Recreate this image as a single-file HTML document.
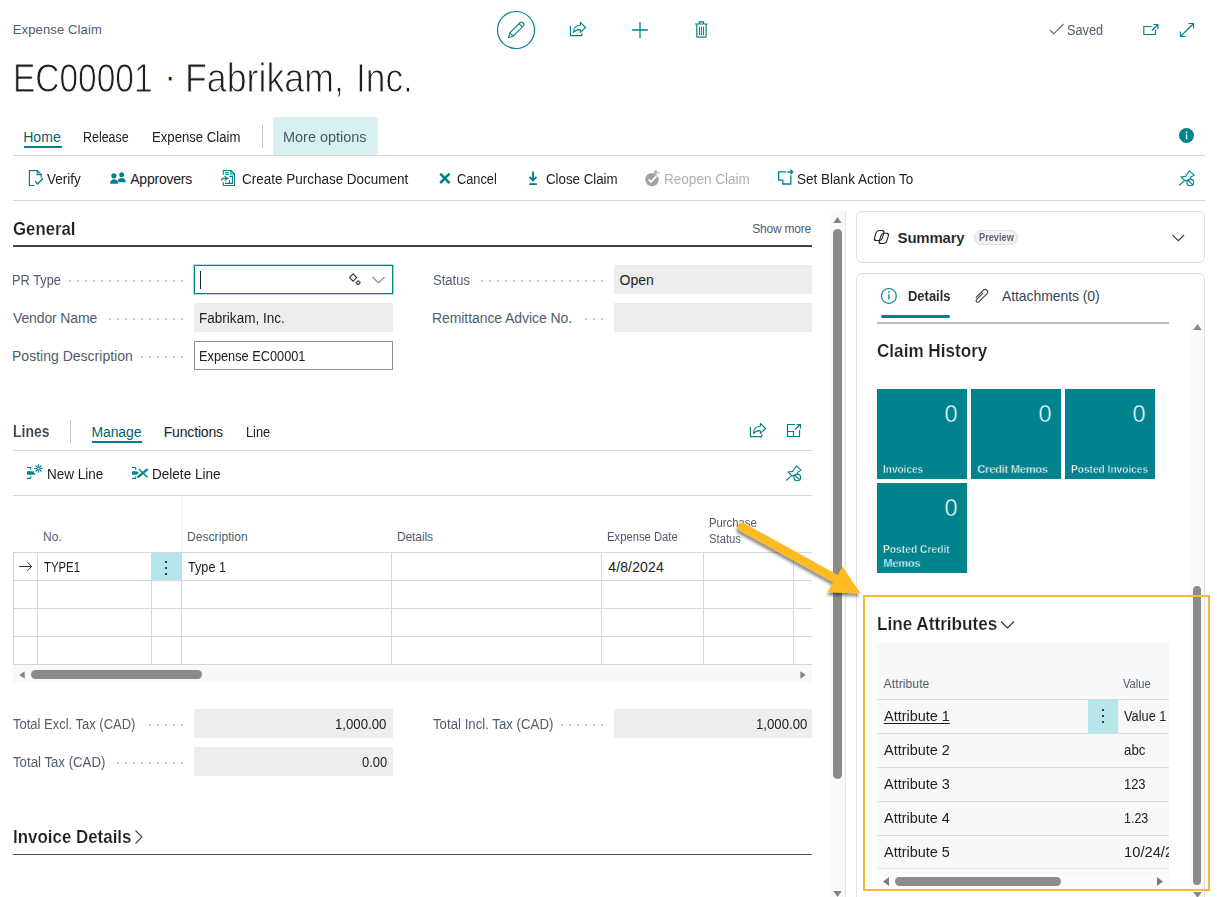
<!DOCTYPE html>
<html lang="en"><head><meta charset="utf-8"><title>Expense Claim</title>
<style>
*{box-sizing:border-box;margin:0;padding:0}
html,body{width:1217px;height:897px;overflow:hidden;background:#fff}
body{position:relative;font-family:"Liberation Sans", sans-serif;color:#212121}
body>div,body>span,body>svg{position:absolute;display:block}
body>span{white-space:nowrap}
</style></head>
<body>
<span style="left:13.7px;top:21.00px;font-size:13px;line-height:18px;font-weight:400;color:#505c6d;letter-spacing:0.142px;margin-left:-1.00px;">Expense Claim</span>
<span style="left:15.5px;top:50.14px;font-size:40px;line-height:56px;font-weight:400;color:#1f1f1f;-webkit-text-stroke:0.900px #fff;transform:scaleX(0.8367);transform-origin:0 0;margin-left:-2.51px;">EC00001</span>
<span style="left:163.5px;top:48.14px;font-size:40px;line-height:56px;font-weight:400;color:#1f1f1f;-webkit-text-stroke:0.900px #fff;">·</span>
<span style="left:188px;top:50.14px;font-size:40px;line-height:56px;font-weight:400;color:#1f1f1f;-webkit-text-stroke:0.900px #fff;transform:scaleX(0.8940);transform-origin:0 0;margin-left:-2.68px;">Fabrikam,</span>
<span style="left:358.3px;top:50.14px;font-size:40px;line-height:56px;font-weight:400;color:#1f1f1f;-webkit-text-stroke:0.900px #fff;transform:scaleX(0.8825);transform-origin:0 0;margin-left:-2.65px;">Inc.</span>
<svg style="left:496px;top:10px;" width="40" height="40" viewBox="0 0 40 40" fill="none"><circle cx="20" cy="20" r="18.5" stroke="#00838c" stroke-width="1.2"/><path d="M12.5 27.5l1.3-4.6L24.2 12.5a1.6 1.6 0 0 1 2.3 0l1 1a1.6 1.6 0 0 1 0 2.3L17.1 26.2z M13.8 22.9l3.3 3.3 M23 13.7l3.3 3.3" stroke="#00838c" stroke-width="1.1" stroke-linejoin="round"/></svg>
<svg style="left:569px;top:21px;" width="18" height="17" viewBox="0 0 18 17" fill="none"><path d="M1.400 5V14.600H12.800V12.200" stroke="#00838c" stroke-width="1.200"/><path d="M11.400 1.400L16.500 6.500L11.400 11.400V8.700C8.500 8.500 6 9.500 4.400 11.500C4.600 7.500 7 4.300 11.400 4Z" stroke="#00838c" stroke-width="1.100" stroke-linejoin="round"/></svg>
<svg style="left:631px;top:21px;" width="18" height="18" viewBox="0 0 18 18" fill="none"><path d="M9 1v16M1 9h16" stroke="#00838c" stroke-width="1.3"/></svg>
<svg style="left:694px;top:20px;" width="16" height="19" viewBox="0 0 16 19" fill="none"><path d="M1 4h12.800M5.200 4v-2.200h4.400v2.200M2.800 4v12.400a.8.800 0 0 0 .8.800h7.700a.8.800 0 0 0 .8-.8V4" stroke="#00838c" stroke-width="1.200"/><path d="M5.500 6.700v8.600M7.500 6.700v8.600M9.500 6.700v8.600" stroke="#00838c" stroke-width="1"/></svg>
<svg style="left:1049px;top:23px;" width="16" height="12" viewBox="0 0 16 12" fill="none"><path d="M1 7l3.800 3.800L14.600 1" stroke="#5a6573" stroke-width="1.100"/></svg>
<span style="left:1067px;top:19.65px;font-size:14px;line-height:20px;font-weight:400;color:#505c6d;transform:scaleX(0.9124);transform-origin:0 0;margin-left:0.00px;">Saved</span>
<svg style="left:1142px;top:22px;" width="17" height="15" viewBox="0 0 17 15" fill="none"><path d="M9.500 4.500H1.800v8h11.700V7.500" stroke="#00838c" stroke-width="1.200"/><path d="M9.800 8.500l6-6M11.500 2.500h4.400v4.400" stroke="#00838c" stroke-width="1.200"/></svg>
<svg style="left:1179px;top:22px;" width="16" height="16" viewBox="0 0 16 16" fill="none"><path d="M1.5 14.5l13-13M9.5 1.5h5v5M1.5 9.5v5h5" stroke="#00838c" stroke-width="1.2"/></svg>
<div style="left:273px;top:117px;width:105px;height:38px;background:#d9f0f2;border-radius:3px 3px 0 0"></div>
<span style="left:24.2px;top:127.15px;font-size:14px;line-height:20px;font-weight:400;color:#00656c;letter-spacing:0.047px;margin-left:-1.00px;">Home</span>
<div style="left:24px;top:145.5px;width:37.5px;height:2px;background:#00838c"></div>
<span style="left:84.3px;top:127.15px;font-size:14px;line-height:20px;font-weight:400;color:#212121;transform:scaleX(0.8897);transform-origin:0 0;margin-left:-0.89px;">Release</span>
<span style="left:152.8px;top:127.15px;font-size:14px;line-height:20px;font-weight:400;color:#212121;transform:scaleX(0.9385);transform-origin:0 0;margin-left:-0.94px;">Expense Claim</span>
<div style="left:262px;top:125px;width:1px;height:23px;background:#c4c7cb"></div>
<span style="left:284.5px;top:127.15px;font-size:14px;line-height:20px;font-weight:400;color:#4a5564;transform:scaleX(1.0321);transform-origin:0 0;margin-left:-1.03px;">More options</span>
<div style="left:13px;top:155px;width:1192px;height:1px;background:#d4d6d9"></div>
<svg style="left:1179px;top:128px;" width="15" height="15" viewBox="0 0 15 15" fill="none"><circle cx="7.5" cy="7.5" r="7.5" fill="#00838c"/><rect x="6.8" y="6.3" width="1.5" height="5" fill="#fff"/><rect x="6.8" y="3.6" width="1.5" height="1.6" fill="#fff"/></svg>
<svg style="left:28px;top:170px;" width="16" height="18" viewBox="0 0 16 18" fill="none"><path d="M6.500 15.500H1.400V0.600H9.200L13.200 4.600V7.500" stroke="#00838c" stroke-width="1.200"/><path d="M9.200 0.600V4.600H13.200" stroke="#00838c" stroke-width="1.200"/><path d="M7.200 11.200L9.600 14L15 8.200" stroke="#00838c" stroke-width="1.400"/></svg>
<span style="left:47.3px;top:169.15px;font-size:14px;line-height:20px;font-weight:400;color:#212121;transform:scaleX(0.9596);transform-origin:0 0;margin-left:0.00px;">Verify</span>
<svg style="left:110px;top:172px;" width="16" height="13" viewBox="0 0 16 13" fill="none"><circle cx="11.700" cy="2.800" r="2.500" fill="#00838c"/><path d="M7.300 10.200c0-2.700 1.700-4.300 4.200-4.300 2.600 0 4.300 1.500 4.300 4.300z" fill="#00838c"/><circle cx="3.900" cy="3.800" r="3.100" fill="#fff"/><path d="M-.4 12.500c0-3.500 1.800-5.800 4.400-5.800 2.700 0 4.800 2 4.800 5.800z" fill="#fff"/><circle cx="3.900" cy="3.800" r="2.600" fill="#00838c"/><path d="M0.100 11.800c0-3 1.600-4.600 3.900-4.600 2.400 0 4.300 1.600 4.300 4.600z" fill="#00838c"/></svg>
<span style="left:130.2px;top:169.15px;font-size:14px;line-height:20px;font-weight:400;color:#212121;letter-spacing:-0.213px;margin-left:0.00px;">Approvers</span>
<svg style="left:221px;top:170px;" width="15" height="18" viewBox="0 0 15 18" fill="none"><path d="M2.300 4.700V0.400H9.900L13.500 4V15.500H2.300V12.200M9.900 0.400V4H13.500M4.200 2.500H7.800M4.200 4.400H7.800M8.400 6.400H11.500V13.400H4.500V12.400M8.500 10.300V13.400" stroke="#00838c" stroke-width="1.100"/><path d="M0.400 10.500C0.400 9 1.200 8.400 2.500 8.400H6.300M3.600 6.300L6.800 8.400L3.600 10.500" stroke="#00838c" stroke-width="1.200"/></svg>
<span style="left:241.6px;top:169.15px;font-size:14px;line-height:20px;font-weight:400;color:#212121;transform:scaleX(0.9626);transform-origin:0 0;margin-left:0.00px;">Create Purchase Document</span>
<svg style="left:438px;top:172px;" width="14" height="13" viewBox="0 0 14 13" fill="none"><path d="M2.200 1.700l9.300 9.300M11.500 1.700l-9.300 9.300" stroke="#00838c" stroke-width="2.500"/></svg>
<span style="left:457px;top:169.15px;font-size:14px;line-height:20px;font-weight:400;color:#212121;transform:scaleX(0.9133);transform-origin:0 0;margin-left:0.00px;">Cancel</span>
<svg style="left:526px;top:171px;" width="13" height="16" viewBox="0 0 13 16" fill="none"><path d="M7 0.500v8.500M3.500 5.800L7 9.400l3.500-3.600" stroke="#00838c" stroke-width="1.900"/><path d="M3.200 13.100h7.600" stroke="#00838c" stroke-width="1.800"/></svg>
<span style="left:545.8px;top:169.15px;font-size:14px;line-height:20px;font-weight:400;color:#212121;transform:scaleX(0.9492);transform-origin:0 0;margin-left:0.00px;">Close Claim</span>
<svg style="left:645px;top:170px;" width="17" height="17" viewBox="0 0 17 17" fill="none"><circle cx="7" cy="9.600" r="6.700" fill="#9fa3a8"/><path d="M9 1.500L16 1.500L16 8z" fill="#fff"/><path d="M3.600 9.600L6 11.800L11.800 5.600" stroke="#fff" stroke-width="1.900"/><path d="M14.500 3.600C13.500 1.800 11.800 1.400 10 2.200M11.200 0.300L9.500 2.400L11.800 3.800" stroke="#9fa3a8" stroke-width="1.100"/></svg>
<span style="left:664.8px;top:169.15px;font-size:14px;line-height:20px;font-weight:400;color:#a9b0ba;transform:scaleX(0.9684);transform-origin:0 0;margin-left:-0.97px;">Reopen Claim</span>
<svg style="left:778px;top:169px;" width="16" height="18" viewBox="0 0 16 18" fill="none"><path d="M8.200 2.800H0.600V11.200H4.700V15H12.800V6.300" stroke="#00838c" stroke-width="1.300"/><path d="M9.500 3H14.600M12.500 0.800L14.800 3L12.500 5.200" stroke="#00838c" stroke-width="1.300"/></svg>
<span style="left:797.2px;top:169.15px;font-size:14px;line-height:20px;font-weight:400;color:#212121;transform:scaleX(0.9662);transform-origin:0 0;margin-left:0.00px;">Set Blank Action To</span>
<svg style="left:1179px;top:170px;" width="17" height="17" viewBox="0 0 17 17" fill="none"><path d="M0 15.500L5.800 10.300M8 10.400L6.100 10.900L2 7L6.600 6.400L10.400 0.900L15.100 5.100L11.600 7.200L11.300 8.700" stroke="#00838c" stroke-width="1.100" stroke-linejoin="round"/><circle cx="11.300" cy="12.400" r="3.300" stroke="#00838c" stroke-width="1.100"/><path d="M8.900 10L13.700 14.800" stroke="#00838c" stroke-width="1.100"/></svg>
<div style="left:13px;top:200px;width:1192px;height:1px;background:#d4d6d9"></div>
<span style="left:13.1px;top:217.26px;font-size:18px;line-height:25px;font-weight:700;color:#212121;-webkit-text-stroke:0.200px #fff;transform:scaleX(0.9329);transform-origin:0 0;margin-left:0.00px;">General</span>
<span style="left:752.3px;top:221.34px;font-size:12px;line-height:17px;font-weight:400;color:#505c6d;letter-spacing:-0.215px;margin-left:0.00px;">Show more</span>
<div style="left:13px;top:245px;width:799px;height:1.5px;background:#3b4655"></div>
<span style="left:13px;top:270.15px;font-size:14px;line-height:20px;font-weight:400;color:#505c6d;transform:scaleX(0.9168);transform-origin:0 0;margin-left:-0.92px;">PR Type</span>
<div style="left:69px;top:280px;width:114px;height:2px;background:repeating-linear-gradient(90deg,#c9cbcf 0 2px,transparent 2px 8px)"></div>
<div style="left:194px;top:265px;width:199px;height:29px;background:#fff;border:1px solid #00838c;box-shadow:0 0 0 0.300px #00838c"></div>
<div style="left:199.5px;top:270.5px;width:1px;height:18.0px;background:#222"></div>
<svg style="left:347px;top:272px;" width="14" height="14" viewBox="0 0 14 14" fill="none"><path d="M6.100 1.900L9.700 5.500L6.100 9.100L2.500 5.500z" stroke="#333" stroke-width="1.100"/><path d="M11.200 8.700L13.200 10.700L11.200 12.700L9.200 10.700z" stroke="#333" stroke-width="1.100"/></svg>
<svg style="left:372px;top:276px;" width="13" height="8" viewBox="0 0 13 8" fill="none"><path d="M0.500 1L6.500 7L12.500 1" stroke="#444" stroke-width="1"/></svg>
<span style="left:13px;top:308.15px;font-size:14px;line-height:20px;font-weight:400;color:#505c6d;letter-spacing:-0.132px;margin-left:0.00px;">Vendor Name</span>
<div style="left:109px;top:318px;width:74px;height:2px;background:repeating-linear-gradient(90deg,#c9cbcf 0 2px,transparent 2px 8px)"></div>
<div style="left:194px;top:303px;width:199px;height:29px;background:#ecedef"></div>
<span style="left:199.5px;top:308.15px;font-size:14px;line-height:20px;font-weight:400;color:#212121;transform:scaleX(0.9677);transform-origin:0 0;margin-left:-0.97px;">Fabrikam, Inc.</span>
<span style="left:13px;top:346.15px;font-size:14px;line-height:20px;font-weight:400;color:#505c6d;letter-spacing:0.010px;margin-left:-1.00px;">Posting Description</span>
<div style="left:141px;top:356px;width:42px;height:2px;background:repeating-linear-gradient(90deg,#c9cbcf 0 2px,transparent 2px 8px)"></div>
<div style="left:194px;top:341px;width:199px;height:29px;background:#fff;border:1px solid #8a9099"></div>
<span style="left:199.5px;top:346.15px;font-size:14px;line-height:20px;font-weight:400;color:#212121;transform:scaleX(0.9115);transform-origin:0 0;margin-left:-0.91px;">Expense EC00001</span>
<span style="left:433px;top:270.15px;font-size:14px;line-height:20px;font-weight:400;color:#505c6d;transform:scaleX(0.9322);transform-origin:0 0;margin-left:0.00px;">Status</span>
<div style="left:481px;top:280px;width:122px;height:2px;background:repeating-linear-gradient(90deg,#c9cbcf 0 2px,transparent 2px 8px)"></div>
<div style="left:614px;top:265px;width:198px;height:29px;background:#ecedef"></div>
<span style="left:619.5px;top:270.15px;font-size:14px;line-height:20px;font-weight:400;color:#212121;">Open</span>
<span style="left:433px;top:308.15px;font-size:14px;line-height:20px;font-weight:400;color:#505c6d;letter-spacing:-0.075px;margin-left:-1.00px;">Remittance Advice No.</span>
<div style="left:585px;top:318px;width:18px;height:2px;background:repeating-linear-gradient(90deg,#c9cbcf 0 2px,transparent 2px 8px)"></div>
<div style="left:614px;top:303px;width:198px;height:29px;background:#ecedef"></div>
<span style="left:13.6px;top:421.46px;font-size:16px;line-height:22px;font-weight:700;color:#3b4655;-webkit-text-stroke:0.100px #fff;transform:scaleX(0.8731);transform-origin:0 0;margin-left:-0.87px;">Lines</span>
<div style="left:70px;top:420px;width:1px;height:23px;background:#c4c7cb"></div>
<span style="left:92.4px;top:422.15px;font-size:14px;line-height:20px;font-weight:400;color:#00656c;letter-spacing:-0.101px;margin-left:-1.00px;">Manage</span>
<div style="left:92px;top:441px;width:50px;height:2px;background:#00838c"></div>
<span style="left:164.7px;top:422.15px;font-size:14px;line-height:20px;font-weight:400;color:#212121;letter-spacing:-0.162px;margin-left:-1.00px;">Functions</span>
<span style="left:246.5px;top:422.15px;font-size:14px;line-height:20px;font-weight:400;color:#212121;transform:scaleX(0.9150);transform-origin:0 0;margin-left:-0.92px;">Line</span>
<svg style="left:749px;top:422px;" width="18" height="17" viewBox="0 0 18 17" fill="none"><path d="M1.400 5V14.600H12.800V12.200" stroke="#00838c" stroke-width="1.200"/><path d="M11.400 1.400L16.500 6.500L11.400 11.400V8.700C8.500 8.500 6 9.500 4.400 11.500C4.600 7.500 7 4.300 11.400 4Z" stroke="#00838c" stroke-width="1.100" stroke-linejoin="round"/></svg>
<svg style="left:786px;top:423px;" width="16" height="15" viewBox="0 0 16 15" fill="none"><path d="M9 1.500H1.500v12h12V7" stroke="#00838c" stroke-width="1.200"/><path d="M1.500 8.500h6v5" stroke="#00838c" stroke-width="1.200"/><path d="M9 6.500l5.500-5M10.500 1.500h4v4" stroke="#00838c" stroke-width="1.200"/></svg>
<div style="left:13px;top:450px;width:799px;height:1px;background:#d4d6d9"></div>
<svg style="left:26px;top:465px;overflow:visible;" width="17" height="15" viewBox="0 0 17 15" fill="none"><path d="M1 2.500H4.700V4.700M4.700 11.400V13.400H1" stroke="#00838c" stroke-width="1.100"/><path d="M1 6.200H7.700V8H8.900V9.700H1z" fill="#00838c"/><path d="M8.300 3.500H16.700M12.500 -0.700V7.700M9.500 0.500L15.500 6.500M15.500 0.500L9.500 6.500" stroke="#00838c" stroke-width="1.100"/><circle cx="12.500" cy="3.500" r="1" fill="#fff"/></svg>
<span style="left:48px;top:464.15px;font-size:14px;line-height:20px;font-weight:400;color:#212121;transform:scaleX(0.9639);transform-origin:0 0;margin-left:-0.96px;">New Line</span>
<svg style="left:131px;top:465px;" width="18" height="15" viewBox="0 0 18 15" fill="none"><path d="M1 2.500H4.700V4.700M4.700 11.400V13.400H1" stroke="#00838c" stroke-width="1.100"/><path d="M1 6.200H5.700L7.900 7.950L5.700 9.700H1z" fill="#00838c"/><path d="M7.800 4L16.500 12.200" stroke="#00838c" stroke-width="1.500"/><path d="M16 4.600L7.200 11.800" stroke="#00838c" stroke-width="2.300" stroke-linecap="round"/></svg>
<span style="left:152.8px;top:464.15px;font-size:14px;line-height:20px;font-weight:400;color:#212121;transform:scaleX(0.9680);transform-origin:0 0;margin-left:-0.97px;">Delete Line</span>
<svg style="left:786px;top:465px;" width="17" height="17" viewBox="0 0 17 17" fill="none"><path d="M0 15.500L5.800 10.300M8 10.400L6.100 10.900L2 7L6.600 6.400L10.400 0.900L15.100 5.100L11.600 7.200L11.300 8.700" stroke="#00838c" stroke-width="1.100" stroke-linejoin="round"/><circle cx="11.300" cy="12.400" r="3.300" stroke="#00838c" stroke-width="1.100"/><path d="M8.900 10L13.700 14.800" stroke="#00838c" stroke-width="1.100"/></svg>
<div style="left:13px;top:495px;width:799px;height:1px;background:#d4d6d9"></div>
<span style="left:43px;top:529.34px;font-size:12px;line-height:17px;font-weight:400;color:#505c6d;">No.</span>
<span style="left:187px;top:529.34px;font-size:12px;line-height:17px;font-weight:400;color:#505c6d;letter-spacing:0.065px;margin-left:0.00px;">Description</span>
<span style="left:397px;top:529.34px;font-size:12px;line-height:17px;font-weight:400;color:#505c6d;letter-spacing:-0.113px;margin-left:0.00px;">Details</span>
<span style="left:607px;top:529.34px;font-size:12px;line-height:17px;font-weight:400;color:#505c6d;transform:scaleX(0.9378);transform-origin:0 0;margin-left:0.00px;">Expense Date</span>
<span style="left:709px;top:515.34px;font-size:12px;line-height:17px;font-weight:400;color:#505c6d;transform:scaleX(0.9408);transform-origin:0 0;margin-left:0.00px;">Purchase</span>
<span style="left:709px;top:531.34px;font-size:12px;line-height:17px;font-weight:400;color:#505c6d;transform:scaleX(0.9406);transform-origin:0 0;margin-left:0.00px;">Status</span>
<div style="left:151px;top:553px;width:30px;height:27px;background:#b5e6ea"></div>
<div style="left:13px;top:552px;width:799px;height:1px;background:#d4d6d9"></div>
<div style="left:13px;top:580px;width:799px;height:1px;background:#d4d6d9"></div>
<div style="left:13px;top:608px;width:799px;height:1px;background:#d4d6d9"></div>
<div style="left:13px;top:636px;width:799px;height:1px;background:#d4d6d9"></div>
<div style="left:13px;top:664px;width:799px;height:1px;background:#d4d6d9"></div>
<div style="left:13px;top:552px;width:1px;height:113px;background:#d4d6d9"></div>
<div style="left:37px;top:552px;width:1px;height:113px;background:#d4d6d9"></div>
<div style="left:151px;top:552px;width:1px;height:113px;background:#d4d6d9"></div>
<div style="left:391px;top:552px;width:1px;height:113px;background:#d4d6d9"></div>
<div style="left:601px;top:552px;width:1px;height:113px;background:#d4d6d9"></div>
<div style="left:703px;top:552px;width:1px;height:113px;background:#d4d6d9"></div>
<div style="left:793px;top:552px;width:1px;height:113px;background:#d4d6d9"></div>
<div style="left:181px;top:496px;width:1px;height:56px;background:#efeff0"></div>
<div style="left:181px;top:552px;width:1px;height:113px;background:#d4d6d9"></div>
<svg style="left:18px;top:561px;" width="15" height="11" viewBox="0 0 15 11" fill="none"><path d="M1.200 5.500H13.500M9.300 1.200L13.700 5.500L9.300 9.800" stroke="#333" stroke-width="1"/></svg>
<span style="left:44.4px;top:557.15px;font-size:14px;line-height:20px;font-weight:400;color:#212121;transform:scaleX(0.8123);transform-origin:0 0;margin-left:0.00px;">TYPE1</span>
<span style="left:188px;top:557.15px;font-size:14px;line-height:20px;font-weight:400;color:#212121;transform:scaleX(0.9043);transform-origin:0 0;margin-left:0.00px;">Type 1</span>
<span style="left:608.2px;top:557.15px;font-size:14px;line-height:20px;font-weight:400;color:#212121;letter-spacing:0.156px;margin-left:0.00px;">4/8/2024</span>
<div style="left:165.3px;top:561.3px;width:2px;height:2px;background:#2a2a2a;border-radius:.5px"></div>
<div style="left:165.3px;top:567.1px;width:2px;height:2px;background:#2a2a2a;border-radius:.5px"></div>
<div style="left:165.3px;top:572.9px;width:2px;height:2px;background:#2a2a2a;border-radius:.5px"></div>
<div style="left:13px;top:665px;width:799px;height:17px;background:#f8f8f8"></div>
<div style="left:31px;top:670px;width:171px;height:9px;background:#8a8a8a;border-radius:4.500px"></div>
<svg style="left:19px;top:671px;" width="6" height="8" viewBox="0 0 6 8" fill="none"><path d="M5.700 0.300v7.400L0.200 4z" fill="#858585"/></svg>
<svg style="left:800px;top:671px;" width="6" height="8" viewBox="0 0 6 8" fill="none"><path d="M0.300 0.300v7.400L5.800 4z" fill="#858585"/></svg>
<span style="left:13px;top:714.15px;font-size:14px;line-height:20px;font-weight:400;color:#505c6d;transform:scaleX(0.9272);transform-origin:0 0;margin-left:0.00px;">Total Excl. Tax (CAD)</span>
<div style="left:149px;top:724px;width:34px;height:2px;background:repeating-linear-gradient(90deg,#c9cbcf 0 2px,transparent 2px 8px)"></div>
<div style="left:194px;top:709px;width:199px;height:29px;background:#ecedef"></div>
<span style="left:336.4px;top:714.15px;font-size:14px;line-height:20px;font-weight:400;color:#212121;transform:scaleX(0.9421);transform-origin:0 0;margin-left:-0.94px;">1,000.00</span>
<span style="left:13px;top:752.15px;font-size:14px;line-height:20px;font-weight:400;color:#505c6d;transform:scaleX(0.9450);transform-origin:0 0;margin-left:0.00px;">Total Tax (CAD)</span>
<div style="left:117px;top:762px;width:66px;height:2px;background:repeating-linear-gradient(90deg,#c9cbcf 0 2px,transparent 2px 8px)"></div>
<div style="left:194px;top:747px;width:199px;height:29px;background:#ecedef"></div>
<span style="left:361.6px;top:752.15px;font-size:14px;line-height:20px;font-weight:400;color:#212121;transform:scaleX(0.9249);transform-origin:0 0;margin-left:0.00px;">0.00</span>
<span style="left:433px;top:714.15px;font-size:14px;line-height:20px;font-weight:400;color:#505c6d;transform:scaleX(0.9454);transform-origin:0 0;margin-left:0.00px;">Total Incl. Tax (CAD)</span>
<div style="left:561px;top:724px;width:42px;height:2px;background:repeating-linear-gradient(90deg,#c9cbcf 0 2px,transparent 2px 8px)"></div>
<div style="left:614px;top:709px;width:198px;height:29px;background:#ecedef"></div>
<span style="left:756.6999999999999px;top:714.15px;font-size:14px;line-height:20px;font-weight:400;color:#212121;transform:scaleX(0.9421);transform-origin:0 0;margin-left:-0.94px;">1,000.00</span>
<span style="left:13.6px;top:825.26px;font-size:18px;line-height:25px;font-weight:700;color:#212121;-webkit-text-stroke:0.200px #fff;transform:scaleX(0.9397);transform-origin:0 0;margin-left:-0.94px;">Invoice Details</span>
<svg style="left:134px;top:829px;" width="10" height="16" viewBox="0 0 10 16" fill="none"><path d="M1.500 1.500l6.500 6.500-6.500 6.500" stroke="#444" stroke-width="1.100"/></svg>
<div style="left:13px;top:854px;width:799px;height:1px;background:#4a5566"></div>
<div style="left:830.5px;top:211px;width:14.5px;height:686px;background:#fafafa"></div>
<svg style="left:833px;top:217px;" width="9" height="6" viewBox="0 0 9 6" fill="none"><path d="M0.300 6h8.400L4.500 0z" fill="#858585"/></svg>
<div style="left:833px;top:228.5px;width:9px;height:550.5px;background:#8a8a8a;border-radius:4.500px"></div>
<svg style="left:833px;top:891px;" width="9" height="6" viewBox="0 0 9 6" fill="none"><path d="M0.300 0h8.400L4.500 6z" fill="#858585"/></svg>
<div style="left:845px;top:211px;width:1px;height:686px;background:#e1e3e7"></div>
<div style="left:856px;top:211px;width:349px;height:52px;border:1px solid #dfe1e6;border-radius:6px;background:#fff"></div>
<div style="left:856px;top:273px;width:349px;height:640px;border:1px solid #dfe1e6;border-radius:6px;background:#fff"></div>
<svg style="left:872px;top:229px;" width="19" height="16" viewBox="0 0 19 16" fill="none"><g stroke="#222" stroke-width="1.100" transform="skewX(-17.700)"><rect x="11.100" y="4.300" width="7.400" height="10.200" rx="2.600"/><rect x="5.300" y="1.500" width="7.800" height="10" rx="2.600"/></g></svg>
<span style="left:897.6px;top:227.30px;font-size:15px;line-height:21px;font-weight:700;color:#212121;-webkit-text-stroke:0.100px #fff;letter-spacing:-0.220px;margin-left:0.00px;">Summary</span>
<div style="left:974px;top:229.5px;width:44px;height:15px;background:#f0f2f4;border:1px solid #dcdfe4;border-radius:8px"></div>
<span style="left:979px;top:230.53px;font-size:10px;line-height:14px;font-weight:700;color:#5a6573;transform:scaleX(0.9205);transform-origin:0 0;margin-left:0.00px;">Preview</span>
<svg style="left:1172px;top:234px;" width="13" height="8" viewBox="0 0 13 8" fill="none"><path d="M0.500 0.800L6.300 6.600L12.100 0.800" stroke="#333" stroke-width="1.100"/></svg>
<svg style="left:880px;top:287px;" width="18" height="18" viewBox="0 0 18 18" fill="none"><circle cx="8.900" cy="8.900" r="7.400" stroke="#00838c" stroke-width="1.200"/><path d="M8.900 7.300v5.300" stroke="#00838c" stroke-width="1.300"/><circle cx="8.900" cy="5.100" r=".85" fill="#00838c"/></svg>
<span style="left:907.5px;top:286.15px;font-size:14px;line-height:20px;font-weight:700;color:#2b2b2b;transform:scaleX(0.9258);transform-origin:0 0;margin-left:0.00px;">Details</span>
<div style="left:881px;top:315px;width:69px;height:3px;background:#00838c;border-radius:1.500px"></div>
<svg style="left:974px;top:289px;overflow:visible;" width="15" height="15" viewBox="0 0 15 15" fill="none"><path transform="translate(7.200 6.900) rotate(-45) translate(-8 -2.500)" d="M3 0H13.500a2.500 2.500 0 0 1 0 5H2.200a1.600 1.600 0 0 1 0-3.200H11.500" stroke="#444" stroke-width="1.100"/></svg>
<span style="left:1002px;top:286.15px;font-size:14px;line-height:20px;font-weight:400;color:#3b4655;letter-spacing:-0.082px;margin-left:0.00px;">Attachments (0)</span>
<div style="left:877px;top:322px;width:292px;height:1.5px;background:#b9bec5"></div>
<div style="left:1189px;top:320px;width:15px;height:577px;background:#fafafa"></div>
<svg style="left:1192.5px;top:324px;" width="9" height="6" viewBox="0 0 9 6" fill="none"><path d="M0.300 6h8.400L4.500 0z" fill="#858585"/></svg>
<div style="left:1192.5px;top:585.5px;width:8.5px;height:299.5px;background:#8a8a8a;border-radius:4.500px"></div>
<svg style="left:1192.5px;top:892px;" width="9" height="6" viewBox="0 0 9 6" fill="none"><path d="M0.300 0h8.400L4.500 6z" fill="#858585"/></svg>
<span style="left:876.7px;top:339.26px;font-size:18px;line-height:25px;font-weight:700;color:#212121;-webkit-text-stroke:0.200px #fff;transform:scaleX(0.9507);transform-origin:0 0;margin-left:0.00px;">Claim History</span>
<div style="left:877px;top:389px;width:90px;height:90px;background:#00838c"></div>
<span style="right:259.5px;top:398.36px;font-size:23.5px;line-height:33px;font-weight:400;color:#fff;-webkit-text-stroke:0.500px #00838c;">0</span>
<span style="left:883.3px;top:461.69px;font-size:11px;line-height:15px;font-weight:700;color:#fff;-webkit-text-stroke:0.400px #00838c;transform:scaleX(0.9111);transform-origin:0 0;margin-left:0.00px;">Invoices</span>
<div style="left:971px;top:389px;width:90px;height:90px;background:#00838c"></div>
<span style="right:165.5px;top:398.36px;font-size:23.5px;line-height:33px;font-weight:400;color:#fff;-webkit-text-stroke:0.500px #00838c;">0</span>
<span style="left:977.3px;top:461.69px;font-size:11px;line-height:15px;font-weight:700;color:#fff;-webkit-text-stroke:0.400px #00838c;letter-spacing:-0.193px;margin-left:0.00px;">Credit Memos</span>
<div style="left:1065px;top:389px;width:90px;height:90px;background:#00838c"></div>
<span style="right:71.5px;top:398.36px;font-size:23.5px;line-height:33px;font-weight:400;color:#fff;-webkit-text-stroke:0.500px #00838c;">0</span>
<span style="left:1071.3px;top:461.69px;font-size:11px;line-height:15px;font-weight:700;color:#fff;-webkit-text-stroke:0.400px #00838c;transform:scaleX(0.9207);transform-origin:0 0;margin-left:0.00px;">Posted Invoices</span>
<div style="left:877px;top:483px;width:90px;height:90px;background:#00838c"></div>
<span style="right:259.5px;top:492.36px;font-size:23.5px;line-height:33px;font-weight:400;color:#fff;-webkit-text-stroke:0.500px #00838c;">0</span>
<span style="left:883.3px;top:541.69px;font-size:11px;line-height:15px;font-weight:700;color:#fff;-webkit-text-stroke:0.400px #00838c;transform:scaleX(0.9325);transform-origin:0 0;margin-left:0.00px;">Posted Credit</span>
<span style="left:883.3px;top:555.69px;font-size:11px;line-height:15px;font-weight:700;color:#fff;-webkit-text-stroke:0.400px #00838c;letter-spacing:-0.195px;margin-left:0.00px;">Memos</span>
<span style="left:877.6px;top:612.26px;font-size:18px;line-height:25px;font-weight:700;color:#212121;-webkit-text-stroke:0.200px #fff;transform:scaleX(0.9524);transform-origin:0 0;margin-left:-0.95px;">Line Attributes</span>
<svg style="left:1000px;top:620px;" width="15" height="9" viewBox="0 0 15 9" fill="none"><path d="M1 1.500l6.500 6.500 6.500-6.500" stroke="#333" stroke-width="1.100"/></svg>
<div style="left:877px;top:643px;width:292px;height:231px;background:#f7f8f9"></div>
<span style="left:883.6px;top:676.34px;font-size:12px;line-height:17px;font-weight:400;color:#505c6d;letter-spacing:0.123px;margin-left:0.00px;">Attribute</span>
<span style="left:1123.3px;top:676.34px;font-size:12px;line-height:17px;font-weight:400;color:#505c6d;transform:scaleX(0.9294);transform-origin:0 0;margin-left:0.00px;">Value</span>
<div style="left:877px;top:699px;width:292px;height:1px;background:#d9dbde"></div>
<div style="left:877px;top:733px;width:292px;height:1px;background:#d9dbde"></div>
<div style="left:877px;top:767px;width:292px;height:1px;background:#d9dbde"></div>
<div style="left:877px;top:801px;width:292px;height:1px;background:#d9dbde"></div>
<div style="left:877px;top:835px;width:292px;height:1px;background:#d9dbde"></div>
<div style="left:877px;top:868px;width:292px;height:1px;background:#e6e7ea"></div>
<div style="left:1088px;top:700px;width:30px;height:33px;background:#b5e6ea"></div>
<div style="left:1101.8px;top:709.1px;width:2px;height:2px;background:#2a2a2a;border-radius:.5px"></div>
<div style="left:1101.8px;top:715.1px;width:2px;height:2px;background:#2a2a2a;border-radius:.5px"></div>
<div style="left:1101.8px;top:721.1px;width:2px;height:2px;background:#2a2a2a;border-radius:.5px"></div>
<span style="left:884px;top:706.15px;font-size:14px;line-height:20px;font-weight:400;color:#212121;text-decoration:underline;text-underline-offset:2px;transform:scaleX(1.0308);transform-origin:0 0;margin-left:0.00px;">Attribute 1</span>
<span style="left:1124.2px;top:706.15px;font-size:14px;line-height:20px;font-weight:400;color:#212121;transform:scaleX(0.9130);transform-origin:0 0;margin-left:0.00px;">Value 1</span>
<span style="left:884px;top:740.15px;font-size:14px;line-height:20px;font-weight:400;color:#212121;transform:scaleX(1.0308);transform-origin:0 0;margin-left:0.00px;">Attribute 2</span>
<span style="left:1124.2px;top:740.15px;font-size:14px;line-height:20px;font-weight:400;color:#212121;transform:scaleX(0.9481);transform-origin:0 0;margin-left:0.00px;">abc</span>
<span style="left:884px;top:774.15px;font-size:14px;line-height:20px;font-weight:400;color:#212121;transform:scaleX(1.0308);transform-origin:0 0;margin-left:0.00px;">Attribute 3</span>
<span style="left:1124.8px;top:774.15px;font-size:14px;line-height:20px;font-weight:400;color:#212121;transform:scaleX(0.9215);transform-origin:0 0;margin-left:-0.92px;">123</span>
<span style="left:884px;top:808.15px;font-size:14px;line-height:20px;font-weight:400;color:#212121;transform:scaleX(1.0308);transform-origin:0 0;margin-left:0.00px;">Attribute 4</span>
<span style="left:1125.2px;top:808.15px;font-size:14px;line-height:20px;font-weight:400;color:#212121;transform:scaleX(0.8918);transform-origin:0 0;margin-left:-0.89px;">1.23</span>
<span style="left:884px;top:842.15px;font-size:14px;line-height:20px;font-weight:400;color:#212121;transform:scaleX(1.0308);transform-origin:0 0;margin-left:0.00px;">Attribute 5</span>
<span style="left:1125.2px;top:842.15px;font-size:14px;line-height:20px;font-weight:400;color:#212121;transform:scaleX(1.0517);transform-origin:0 0;margin-left:-1.05px;">10/24/2</span>
<div style="left:1169px;top:643px;width:20px;height:231px;background:#fff"></div>
<div style="left:877px;top:874px;width:292px;height:15px;background:#fbfbfb"></div>
<div style="left:895px;top:877px;width:166px;height:9px;background:#8c8c8c;border-radius:4.500px"></div>
<svg style="left:883px;top:877px;" width="6" height="9" viewBox="0 0 6 9" fill="none"><path d="M6 0v9L0 4.500z" fill="#7d7d7d"/></svg>
<svg style="left:1157px;top:877px;" width="6" height="9" viewBox="0 0 6 9" fill="none"><path d="M0 0v9l6-4.500z" fill="#7d7d7d"/></svg>
<div style="left:863px;top:595px;width:347px;height:296px;border:2px solid #f6b92f"></div>
<svg style="left:720px;top:500px" width="160" height="120" viewBox="720 500 160 120" fill="none">
<defs><filter id="sh" x="-20%" y="-20%" width="140%" height="150%"><feGaussianBlur in="SourceAlpha" stdDeviation="1.600"/><feOffset dx="-1.500" dy="2.500"/><feComponentTransfer><feFuncA type="linear" slope=".45"/></feComponentTransfer><feMerge><feMergeNode/><feMergeNode in="SourceGraphic"/></feMerge></filter></defs>
<g filter="url(#sh)"><path d="M742 527L838 580" stroke="#fdbb24" stroke-width="8.800" stroke-linecap="round"/><path d="M842.400 566.500L860.700 593.600L827.700 592.300z" fill="#fdbb24"/></g></svg>
</body></html>
